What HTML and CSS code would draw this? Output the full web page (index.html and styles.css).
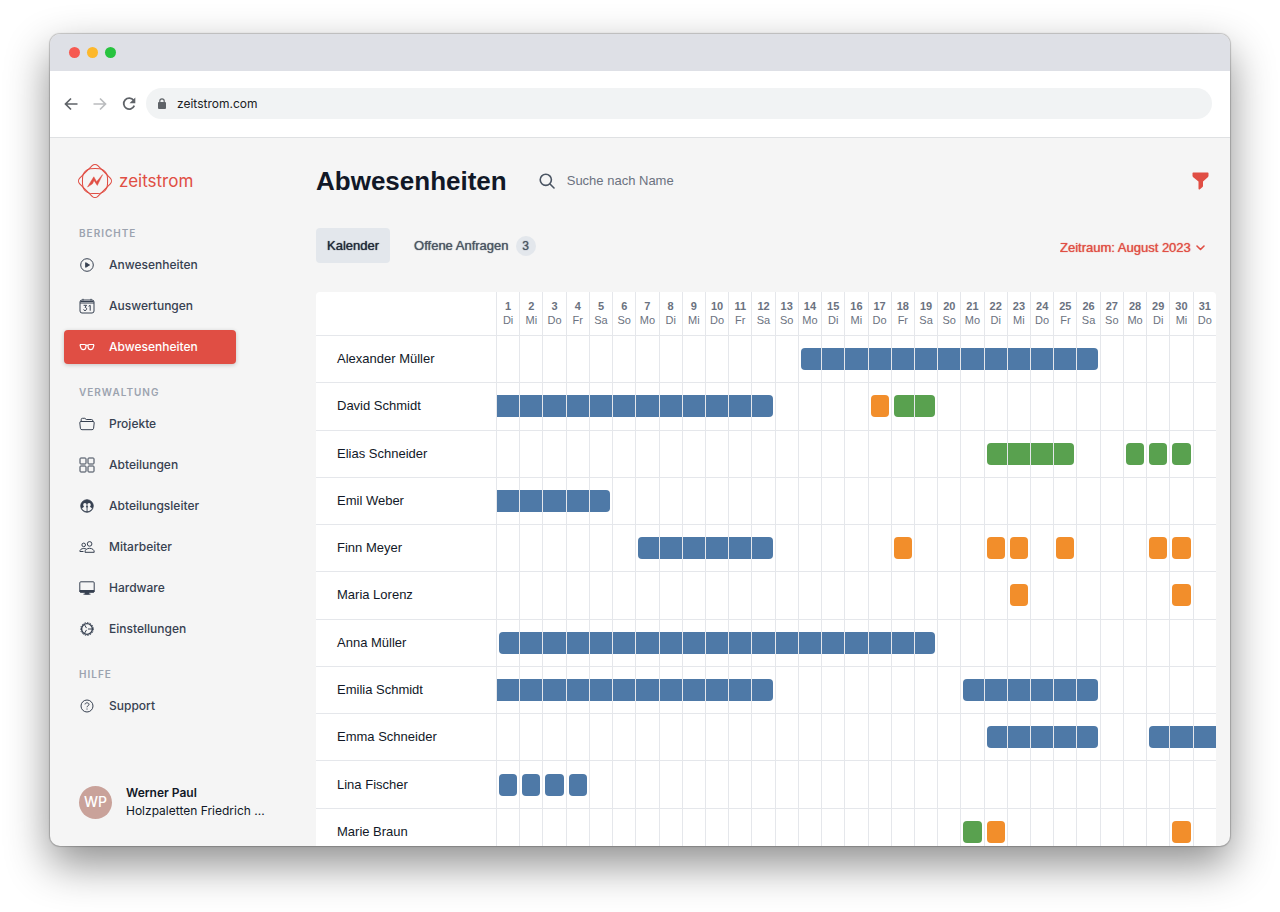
FILE: index.html
```html
<!DOCTYPE html>
<html lang="de">
<head>
<meta charset="utf-8">
<title>zeitstrom – Abwesenheiten</title>
<link rel="stylesheet" href="styles.css">
</head>
<body>
<div class="window">
  <div class="titlebar">
    <span class="dot dot-red"></span><span class="dot dot-yellow"></span><span class="dot dot-green"></span>
  </div>
  <div class="toolbar">
    <button class="tool" aria-label="Zurück"><svg width="16" height="16" viewBox="0 0 16 16" fill="none" stroke="#5f6368" stroke-width="1.700"><path d="M14.500 8H3M8 2.500L2.500 8L8 13.500"/></svg></button>
    <button class="tool" aria-label="Vor"><svg width="16" height="16" viewBox="0 0 16 16" fill="none" stroke="#babcbe" stroke-width="1.700"><path d="M1.500 8H13M8 2.500L13.500 8L8 13.500"/></svg></button>
    <button class="tool" aria-label="Neu laden"><svg width="16" height="16" viewBox="0 0 16 16"><path d="M12.600 4.200A5.500 5.500 0 1 0 13.300 9.700" fill="none" stroke="#5f6368" stroke-width="1.800"/><path d="M14.300 1.500V7.300H8.500Z" fill="#5f6368"/></svg></button>
    <div class="address">
      <svg width="10" height="12" viewBox="0 0 10 12"><rect x="1" y="4" width="8" height="7" rx="1" fill="#5f6368"/><path d="M2.800 4.500V3a2.200 2.200 0 0 1 4.400 0v1.500" fill="none" stroke="#5f6368" stroke-width="1.200"/></svg>
      <input class="address-input" type="text" value="zeitstrom.com" aria-label="Adresse">
    </div>
  </div>
  <div class="app">
    <aside class="sidebar">
      <a class="brand" href="#">
        <svg width="34" height="34" viewBox="0 0 34 34" fill="none" stroke="#e04e44" stroke-width="1.100"><rect x="4.200" y="4.200" width="25.600" height="25.600" rx="4" transform="rotate(45 17 17)"/><path d="M17 3.900C20.500 3.900 23.500 4.300 25 5.200C27 6.300 27.700 7 28.800 9C29.700 10.500 30.100 13.500 30.100 17S29.700 23.500 28.800 25C27.700 27 27 27.700 25 28.800C23.500 29.700 20.500 30.100 17 30.100S10.500 29.700 9 28.800C7 27.700 6.300 27 5.200 25C4.300 23.500 3.900 20.500 3.900 17S4.300 10.500 5.200 9C6.300 7 7 6.300 9 5.200C10.500 4.300 13.500 3.900 17 3.900Z" transform="translate(.7 .7) scale(.96)"/><path d="M9.500 23L15.800 12.800L18.600 17.700L24.600 10.600L19.300 21.400L16 16.400L14.500 19.800Z" fill="#e04e44" stroke-width=".5"/></svg>
        <span>zeitstrom</span>
      </a>
      <nav class="nav">
        <h2 class="nav-title">Berichte</h2>
        <a class="nav-item" href="#"><svg class="icon" viewBox="0 0 16 16"><circle cx="8" cy="8" r="6.300"/><path class="solid" d="M6.700 5.700L10.500 8L6.700 10.300Z"/></svg>Anwesenheiten</a>
        <a class="nav-item" href="#"><svg class="icon" viewBox="0 0 16 16"><rect x="1" y="2" width="14" height="13" rx="2"/><path d="M1 5H15M4 .8V2.500M12 .8V2.500M1.500 3.500H14.500"/><path d="M4.600 7.300H7.600L6 9.300C8.200 9.200 8.200 12.500 6 12.500C5.200 12.500 4.700 12.100 4.500 11.500M9.600 8.300L11.200 7.300V12.700"/></svg>Auswertungen</a>
        <a class="nav-item nav-active" href="#" aria-current="page"><svg class="icon" viewBox="0 0 16 16"><path d="M1 5.500H5.600C6.600 5.500 7 6.200 7 7C7 9 6 10.600 4.300 10.600C2.500 10.600 1.700 9 1.500 7.500L1 5.500M15 5.500H10.400C9.400 5.500 9 6.200 9 7C9 9 10 10.600 11.700 10.600C13.500 10.600 14.300 9 14.500 7.500L15 5.500M6.800 6.500Q8 5.600 9.200 6.500" stroke-width="1.200"/></svg>Abwesenheiten</a>
        <h2 class="nav-title">Verwaltung</h2>
        <a class="nav-item" href="#"><svg class="icon" viewBox="0 0 16 16"><path d="M2.200 5.500V3.600Q2.200 2.300 3.500 2.300H5.800L7.300 3.500H12.500Q13.800 3.500 13.800 4.800V5.500M2 5.500H14Q15.300 5.500 15.200 6.800L14.600 12.300Q14.400 13.700 13 13.700H3Q1.600 13.700 1.400 12.300L.8 6.800Q.7 5.500 2 5.500Z"/></svg>Projekte</a>
        <a class="nav-item" href="#"><svg class="icon" viewBox="0 0 16 16"><rect x="1" y="1" width="6" height="6" rx=".8"/><rect x="9" y="1" width="6" height="6" rx=".8"/><rect x="1" y="9" width="6" height="6" rx=".8"/><rect x="9" y="9" width="6" height="6" rx=".8"/></svg>Abteilungen</a>
        <a class="nav-item" href="#"><svg class="icon" viewBox="0 0 16 16"><circle class="solid" cx="8" cy="8" r="6.200"/><path class="cut" d="M3 10.200C4 9.200 4.800 9 5.300 8.900C3.700 8 3.900 4.900 5.900 4.900C7.500 4.900 8 6.700 7.400 8C7.200 8.500 7 8.700 6.800 8.900L7.600 9.600V13.200C5.200 13 3.700 12 3 10.200ZM13 10.200C12 9.200 11.300 9 10.700 8.900C12.300 8 12.100 4.900 10.100 4.900C8.500 4.900 8 6.700 8.600 8C8.800 8.500 9 8.700 9.200 8.900L8.500 9.600V13.200C10.800 13 12.300 12 13 10.200Z"/></svg>Abteilungsleiter</a>
        <a class="nav-item" href="#"><svg class="icon" viewBox="0 0 16 16"><circle cx="10.600" cy="4.900" r="2.300"/><circle cx="4.700" cy="5.900" r="1.800"/><path d="M6 13.300C5.600 11 8 9.300 10.600 9.300S15.600 11 15.200 13.300ZM4.500 12.500H.9C.6 10.800 2.500 9.500 4.700 9.500Q6 9.500 7 10"/></svg>Mitarbeiter</a>
        <a class="nav-item" href="#"><svg class="icon" viewBox="0 0 16 16"><rect x=".8" y="1.800" width="14.400" height="10.400" rx="1"/><path class="solid" d="M1 10.500H15V12H1ZM6.200 12.500H9.800V14H6.200Z"/><path d="M4.500 14.200H11.500"/></svg>Hardware</a>
        <a class="nav-item" href="#"><svg class="icon" viewBox="0 0 16 16"><circle cx="8" cy="8" r="5.400" stroke-width="1.400"/><circle cx="8" cy="8" r="6.400" stroke-dasharray="1.340 1.340"/><path d="M9 8H13M7.500 7.100L5.500 3.700M7.500 8.900L5.500 12.300"/></svg>Einstellungen</a>
        <h2 class="nav-title">Hilfe</h2>
        <a class="nav-item" href="#"><svg class="icon" viewBox="0 0 16 16"><circle cx="8" cy="8" r="6"/><path d="M6 6.400C6 4.300 10 4.300 10 6.400C10 7.800 8 7.700 8 9.300M8 10.500V11.600"/></svg>Support</a>
      </nav>
      <div class="user">
        <span class="avatar">WP</span>
        <div class="user-text"><strong>Werner Paul</strong><span>Holzpaletten Friedrich ...</span></div>
      </div>
    </aside>
    <main class="main">
      <header class="head">
        <h1 class="title">Abwesenheiten</h1>
        <label class="search">
          <svg width="16" height="16" viewBox="0 0 16 16" fill="none" stroke="#4b5563" stroke-width="1.600"><circle cx="6.800" cy="6.800" r="5.600"/><path d="M11 11L15 15" stroke-linecap="round"/></svg>
          <input class="search-input" type="text" placeholder="Suche nach Name" aria-label="Suche nach Name">
        </label>
        <button class="filter" aria-label="Filter"><svg width="17" height="18" viewBox="0 0 17 18"><path d="M1.200 .5H15.800Q16.500 .5 16.500 1.200V3.800Q16.500 4.700 15.800 5.300L11 9.600V14Q11 14.600 10.500 15.100L8 17.300Q6.500 18 6.500 16.600V9.600L1.200 5.300Q.5 4.700 .5 3.800V1.200Q.5 .5 1.200 .5Z" fill="#e04e44"/></svg></button>
      </header>
      <div class="bar">
        <button class="tab tab-active">Kalender</button>
        <button class="tab">Offene Anfragen<span class="badge">3</span></button>
        <label class="period">
          <select class="period-select" aria-label="Zeitraum"><option>Zeitraum: August 2023</option></select>
          <svg width="9" height="6" viewBox="0 0 9 6" fill="none" stroke="#e04e44" stroke-width="1.600" stroke-linecap="round" stroke-linejoin="round"><path d="M1 1L4.500 4.500L8 1"/></svg>
        </label>
      </div>
      <div class="calendar">
        <table class="grid">
          <thead><tr id="days"><td class="name"></td></tr></thead>
          <tbody id="people"></tbody>
        </table>
      </div>
    </main>
  </div>
</div>
<script src="calendar.js"></script>
</body>
</html>
```
FILE: calendar.js
```js
const DAYS = 31;
const WEEKDAYS = ["Mo", "Di", "Mi", "Do", "Fr", "Sa", "So"];

// Each absence: [colour, first day, last day, side on which it runs past the month]
const PEOPLE = [
  ["Alexander Müller", [["blue", 14, 26]]],
  ["David Schmidt", [["blue", 1, 12, "left"], ["orange", 17, 17], ["green", 18, 19]]],
  ["Elias Schneider", [["green", 22, 25], ["green", 28, 28], ["green", 29, 29], ["green", 30, 30]]],
  ["Emil Weber", [["blue", 1, 5, "left"]]],
  ["Finn Meyer", [["blue", 7, 12], ["orange", 18, 18], ["orange", 22, 22], ["orange", 23, 23], ["orange", 25, 25], ["orange", 29, 29], ["orange", 30, 30]]],
  ["Maria Lorenz", [["orange", 23, 23], ["orange", 30, 30]]],
  ["Anna Müller", [["blue", 1, 19]]],
  ["Emilia Schmidt", [["blue", 1, 12, "left"], ["blue", 21, 26]]],
  ["Emma Schneider", [["blue", 22, 26], ["blue", 29, 31, "right"]]],
  ["Lina Fischer", [["blue", 1, 1], ["blue", 2, 2], ["blue", 3, 3], ["blue", 4, 4]]],
  ["Marie Braun", [["green", 21, 21], ["orange", 22, 22], ["orange", 30, 30]]]
];

const head = document.getElementById("days");
for (let day = 1; day <= DAYS; day++) {
  const th = document.createElement("th");
  th.className = "day";
  th.scope = "col";
  th.innerHTML = `<b>${day}</b><span>${WEEKDAYS[day % 7]}</span>`;
  head.append(th);
}

const body = document.getElementById("people");
for (const [name, absences] of PEOPLE) {
  const row = document.createElement("tr");
  const th = document.createElement("th");
  th.className = "name";
  th.scope = "row";
  th.textContent = name;
  row.append(th);
  for (let day = 1; day <= DAYS; day++) {
    const td = document.createElement("td");
    const hit = absences.find(a => day >= a[1] && day <= a[2]);
    if (hit) {
      const mark = document.createElement("div");
      mark.className = "mark " + hit[0];
      if (day === hit[1] && hit[3] !== "left") mark.classList.add("start");
      if (day === hit[2] && hit[3] !== "right") mark.classList.add("end");
      td.append(mark);
    }
    row.append(td);
  }
  body.append(row);
}
```
FILE: styles.css
```css
* { box-sizing: border-box; }
body {
  margin: 0;
  height: 100vh;
  padding: 34px 50px 66px;
  background: #fff;
  font: 13px/18px "Liberation Sans", Arial, sans-serif;
  color: #111827;
}
button, input, select { font: inherit; color: inherit; border: 0; padding: 0; margin: 0; background: none; outline: 0; }
a { color: inherit; text-decoration: none; }
svg { display: block; flex: none; }

.window {
  height: 100%;
  display: flex;
  flex-direction: column;
  border-radius: 10px;
  overflow: hidden;
  background: #f5f5f5;
  box-shadow: 0 0 1px 1px rgba(0, 0, 0, .2), 0 18px 44px rgba(0, 0, 0, .45);
}
.titlebar { flex: none; height: 37px; display: flex; align-items: center; gap: 7px; padding: 0 19px; background: #dee0e6; }
.dot { width: 11px; height: 11px; border-radius: 50%; }
.dot-red { background: #f65a52; }
.dot-yellow { background: #fdb82b; }
.dot-green { background: #27c33f; }
.toolbar { flex: none; height: 67px; display: flex; align-items: center; gap: 13px; padding: 0 18px 1px 13px; background: #fff; border-bottom: 1px solid #dfe1e3; }
.tool { width: 16px; height: 16px; }
.address { flex: 1; height: 31px; margin-left: -4px; display: flex; align-items: center; gap: 10px; padding: 0 11px; border-radius: 16px; background: #f1f3f4; }
.address-input { flex: 1; font-family: Inter, sans-serif; font-size: 12px; color: #202124; }

.app { flex: 1; min-height: 0; display: flex; }
.sidebar { flex: none; width: 250px; display: flex; flex-direction: column; padding: 26px 14px 26px; font-family: Inter, sans-serif; font-size: 12px; }
.brand { display: flex; align-items: center; gap: 7px; padding-left: 14px; margin-bottom: 7px; font-size: 17px; color: #e04e44; }
.nav { display: flex; flex-direction: column; gap: 7px; }
.nav-title { margin: 13px 0 0; padding-left: 15px; font-size: 10px; line-height: 16px; font-weight: 600; letter-spacing: 1px; text-transform: uppercase; color: #9ca3af; }
.nav-title:first-child { margin-top: 20px; }
.nav-item { width: 172px; height: 34px; display: flex; align-items: center; gap: 14px; padding-left: 15px; border-radius: 4px; font-weight: 500; color: #374151; }
.icon { width: 16px; height: 16px; fill: none; stroke: currentColor; stroke-width: 1; }
.icon .solid { fill: currentColor; }
.icon .cut { fill: #f5f5f5; stroke: none; }
.nav-active { background: #e04e44; color: #fff; box-shadow: 0 1px 4px rgba(0, 0, 0, .2); }
.user { margin-top: auto; display: flex; align-items: center; gap: 14px; padding-left: 15px; }
.avatar { width: 33px; height: 33px; flex: none; display: grid; place-items: center; border-radius: 50%; background: #c9a29a; color: #fff; font-size: 14px; font-weight: 500; }
.user-text { display: flex; flex-direction: column; white-space: nowrap; }
.user-text strong { font-weight: 600; }

.main { flex: 1; min-width: 0; display: flex; flex-direction: column; padding: 26px 14px 0 16px; }
.head { flex: none; height: 34px; display: flex; align-items: center; padding-right: 7px; }
.title { margin: 0; font-size: 26px; line-height: 34px; font-weight: 700; }
.search { flex: 1; display: flex; align-items: center; gap: 12px; margin-left: 32px; }
.search-input { flex: 1; }
.search-input::placeholder { color: #6b7280; opacity: 1; }
.bar { flex: none; display: flex; align-items: flex-end; gap: 13px; margin: 30px 0 29px; }
.tab { height: 35px; display: flex; align-items: center; gap: 7px; padding: 0 11px; border-radius: 4px; color: #4b5563; text-shadow: 0 0 1px currentColor; }
.tab-active { background: #e3e7ec; color: #1f2937; }
.badge { width: 20px; height: 20px; display: grid; place-items: center; border-radius: 50%; background: #e3e7ec; font-size: 12px; }
.period { height: 30px; display: flex; align-items: center; gap: 4px; margin-left: auto; padding-right: 11px; color: #e04e44; }
.period-select { appearance: none; text-shadow: 0 0 1px currentColor; }

.calendar { flex: 1; min-height: 0; overflow: hidden; border-radius: 4px 4px 0 0; background: #fff; }
.grid { width: 100%; height: 564px; table-layout: fixed; border-collapse: separate; border-spacing: 0; }
.grid th, .grid td { padding: 0; border-bottom: 1px solid #e5e7eb; border-left: 1px solid #e5e7eb; font-weight: 400; }
.grid .name { width: 180px; padding-left: 21px; border-left: 0; text-align: left; }
.grid thead tr { height: 44px; }
.grid .day { padding-bottom: 2px; font-size: 11px; line-height: 14px; color: #6b7280; }
.day b, .day span { display: block; }
.mark { height: 22px; }
.start { margin-left: 2px; border-radius: 4px 0 0 4px; }
.end { margin-right: 2px; border-radius: 0 4px 4px 0; }
.start.end { border-radius: 4px; }
.blue { background: #4e79a7; }
.green { background: #59a14f; }
.orange { background: #f28e2b; }
```
